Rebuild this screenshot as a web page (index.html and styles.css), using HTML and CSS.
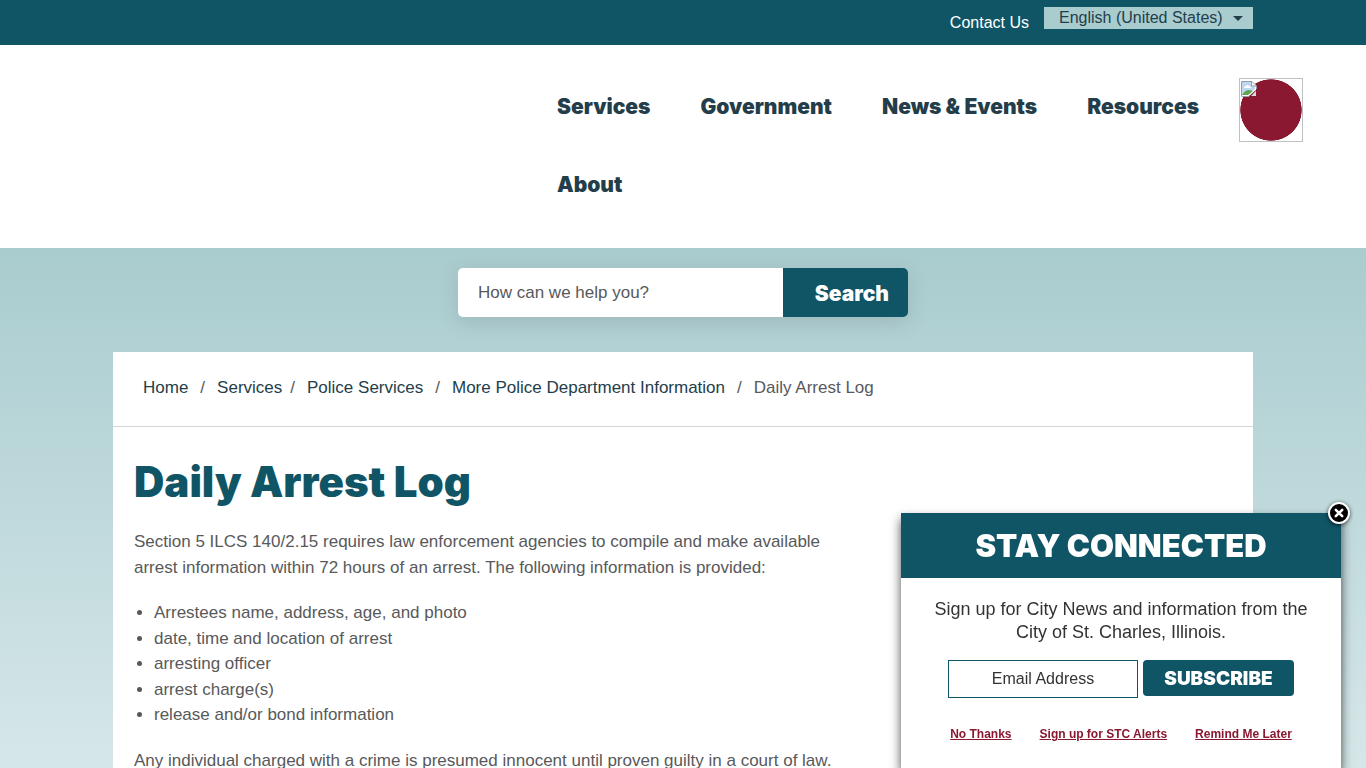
FILE: index.html
```html
<!DOCTYPE html>
<html lang="en">
<head>
  <meta charset="UTF-8">
  <meta name="viewport" content="width=device-width, initial-scale=1">
  <title>Daily Arrest Log</title>
  <link rel="stylesheet" href="styles.css">
</head>
<body>

<!-- Top bar -->
<div class="top-bar">
  <div class="container top-inner">
    <a class="contact" href="#">Contact Us</a>
    <div class="language">
      <select aria-label="Language">
        <option>English (United States)</option>
        <option>Español</option>
      </select>
    </div>
  </div>
</div>

<!-- Header -->
<header class="header">
  <div class="header-inner">
    <nav class="nav">
      <a href="#">Services</a>
      <a href="#">Government</a>
      <a href="#">News &amp; Events</a>
      <a href="#">Resources</a>
      <a href="#">About</a>
    </nav>
    <a class="round-link" href="#" aria-label="Menu">
      <svg width="16" height="16" viewBox="0 0 16 16">
        <path d="M0 0H11L15 4V9L8 15H0Z" fill="#fff"/>
        <path d="M1 1H10V5H14V8L7 14H1Z" fill="#c1d6ef"/>
        <path d="M3 7q0-2 2-2 1-2 3 0 2 0 2 2z" fill="#fff"/>
        <path d="M1 14q3-5 7-5l4 1-5 4z" fill="#5ba650"/>
        <path d="M10 15l5-5v5z" fill="#d4dce0"/>
        <path d="M.5 15V.5H11L15.500 5V8M.5 15.500H8M10.500 .5V5H15" fill="none" stroke="#929eac"/>
      </svg>
    </a>
  </div>
</header>

<main class="page">
  <form class="search">
    <input type="text" placeholder="How can we help you?" aria-label="Search the site">
    <button type="submit">Search</button>
  </form>

  <div class="container content">
    <nav class="breadcrumb" aria-label="Breadcrumb">
      <a href="#">Home</a>
      <span class="slash">/</span>
      <a href="#">Services</a>
      <span class="slash tight">/</span>
      <a href="#">Police Services</a>
      <span class="slash">/</span>
      <a href="#">More Police Department Information</a>
      <span class="slash">/</span>
      <span>Daily Arrest Log</span>
    </nav>

    <article class="article">
      <h1>Daily Arrest Log</h1>
      <p>Section 5 ILCS 140/2.15 requires law enforcement agencies to compile and make available arrest information within 72 hours of an arrest. The following information is provided:</p>
      <ul>
        <li>Arrestees name, address, age, and photo</li>
        <li>date, time and location of arrest</li>
        <li>arresting officer</li>
        <li>arrest charge(s)</li>
        <li>release and/or bond information</li>
      </ul>
      <p>Any individual charged with a crime is presumed innocent until proven guilty in a court of law.</p>
    </article>
  </div>
</main>

<!-- Newsletter popup -->
<aside class="popup">
  <button class="close" type="button" aria-label="Close">
    <svg width="26" height="26" viewBox="0 0 26 26">
      <circle cx="13" cy="13" r="10" fill="#000" stroke="#fff" stroke-width="2"/>
      <path d="M9.800 9.800l6.400 6.400M16.200 9.800l-6.400 6.400" stroke="#fff" stroke-width="2.600" stroke-linecap="round"/>
    </svg>
  </button>
  <h2>STAY CONNECTED</h2>
  <div class="popup-body">
    <p>Sign up for City News and information from the City of St. Charles, Illinois.</p>
    <form class="signup">
      <input type="email" placeholder="Email Address" aria-label="Email Address">
      <button type="submit">SUBSCRIBE</button>
    </form>
    <div class="popup-links">
      <a href="#">No Thanks</a>
      <a href="#">Sign up for STC Alerts</a>
      <a href="#">Remind Me Later</a>
    </div>
  </div>
</aside>

</body>
</html>
```
FILE: styles.css
```css
* {
  box-sizing: border-box;
}

body {
  margin: 0;
  font-family: "Liberation Sans", Arial, sans-serif;
  font-size: 17px;
  line-height: 1.5;
  color: #58595b;
  background: #fff;
}

a {
  color: #233e4a;
  text-decoration: none;
}

.container {
  max-width: 1140px;
  margin: 0 auto;
}

/* Top bar */
.top-bar {
  background: #105566;
  height: 45px;
}

.top-inner {
  display: flex;
  justify-content: flex-end;
  align-items: flex-start;
  gap: 15px;
  padding-top: 7px;
}

.contact {
  color: #fff;
  font-size: 16px;
  line-height: 32px;
}

.language {
  position: relative;
  width: 209px;
}

.language select {
  appearance: none;
  display: block;
  width: 100%;
  height: 22px;
  padding: 0 15px 2px;
  border: 0;
  border-radius: 0;
  background: #a9cccf;
  color: #233e4a;
  font: 16px "Liberation Sans", Arial, sans-serif;
}

.language::after {
  content: "";
  position: absolute;
  right: 10px;
  top: 9px;
  border: 5px solid transparent;
  border-top-color: #233e4a;
  border-bottom: 0;
  pointer-events: none;
}

/* Header */
.header-inner {
  display: flex;
  justify-content: flex-end;
  max-width: 1240px;
  margin: 0 auto;
  padding: 33px 0 14px;
}

.nav {
  display: flex;
  flex-wrap: wrap;
  width: 707px;
}

.nav a {
  padding: 0 25px;
  font: 900 21px/58px Inter, sans-serif;
  margin-bottom: 20px;
}

.round-link {
  display: block;
  width: 64px;
  height: 64px;
  padding: 2px 1px;
  border: 1px solid #c0c0c0;
  background: radial-gradient(circle closest-side, #8a1830 98%, transparent);
  line-height: 0;
}

/* Search */
.page {
  padding-top: 20px;
  background: linear-gradient(#a9cccf, #d8e8ea);
}

.search {
  display: flex;
  width: 450px;
  height: 49px;
  margin: 0 auto 35px;
  border-radius: 5px;
  box-shadow: 0 5px 20px rgba(88, 89, 91, 0.2);
}

.search input {
  flex: 1;
  min-width: 0;
  padding: 0 20px;
  border: 0;
  border-radius: 5px 0 0 5px;
  font: 17px "Liberation Sans", Arial, sans-serif;
}

.search input::placeholder {
  color: #58595b;
}

.search button {
  width: 125px;
  padding: 2px 19px 0 0;
  border: 0;
  border-radius: 0 5px 5px 0;
  background: #105566;
  color: #fff;
  font: 900 21px Inter, sans-serif;
  text-align: right;
}

/* Content */
.content {
  background: #fff;
}

.breadcrumb {
  display: flex;
  flex-wrap: wrap;
  padding: 23px 30px 26px;
  border-bottom: 1px solid #d2d6d6;
  line-height: 25px;
}

.slash {
  margin: 0 12px;
}

.slash.tight {
  margin-left: 8px;
}

.article {
  max-width: 740px;
  padding: 30px 21px 1px;
}

h1 {
  margin: 0 0 22px;
  color: #105566;
  font: 900 42px/50px Inter, sans-serif;
}

.article p,
.article ul {
  margin: 0 0 20px;
}

.article ul {
  padding-left: 20px;
}

/* Popup */
.popup {
  position: fixed;
  right: 25px;
  bottom: 0;
  width: 440px;
  height: 255px;
  background: #fff;
  box-shadow: 0 6px 10px rgba(0, 0, 0, 0.7);
  text-align: center;
}

.popup h2 {
  margin: 0;
  background: #105566;
  color: #fff;
  font: 900 31px/66px Inter, sans-serif;
  height: 65px;
}

.close {
  position: absolute;
  top: -13px;
  right: -11px;
  padding: 0;
  border: 0;
  border-radius: 50%;
  background: none;
  line-height: 0;
  filter: drop-shadow(0 1px 2px rgba(0, 0, 0, 0.7));
}

.popup-body {
  padding: 20px 30px;
}

.popup-body p {
  margin: 0 0 16px;
  color: #333;
  font-size: 18px;
  line-height: 23px;
}

.signup {
  display: flex;
  justify-content: center;
  align-items: flex-start;
  gap: 5px;
}

.signup input {
  width: 190px;
  height: 38px;
  border: 1px solid #105566;
  font: 16px "Liberation Sans", Arial, sans-serif;
  text-align: center;
}

.signup input::placeholder {
  color: #333;
}

.signup button {
  width: 151px;
  height: 36px;
  padding: 0;
  border: 0;
  border-radius: 4px;
  background: #105566;
  color: #fff;
  font: 900 19px Inter, sans-serif;
}

.popup-links {
  display: flex;
  justify-content: center;
  gap: 28px;
  margin-top: 27px;
  font-size: 12px;
  font-weight: bold;
}

.popup-links a {
  color: #8a1830;
  text-decoration: underline;
}
```
